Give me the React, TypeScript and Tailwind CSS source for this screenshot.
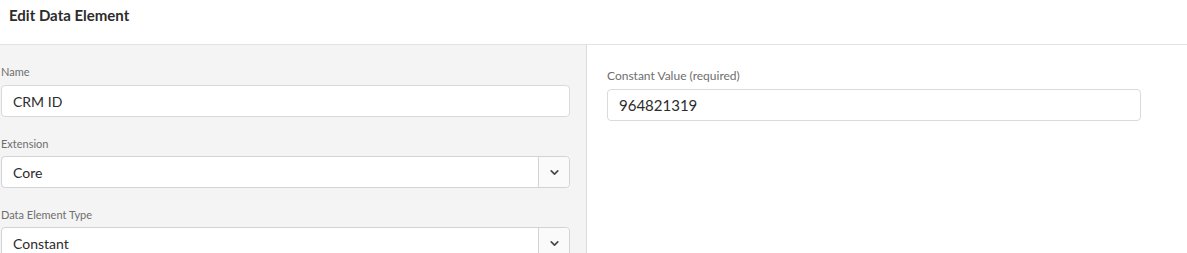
import { ChevronDown } from 'lucide-react';

const font = { fontFamily: 'Lato, "Noto Sans", Arial, sans-serif' };

function Field({
  label,
  value,
  className = '',
  labelSize = 'text-[11px]',
  valueSize = 'text-[14px]',
}: {
  label: string;
  value: string;
  className?: string;
  labelSize?: string;
  valueSize?: string;
}) {
  return (
    <div className={className}>
      <div className={`${labelSize} leading-4 text-[#6e6e6e] mb-[5px]`}>{label}</div>
      <div className={`h-8 bg-white border border-[#dadada] rounded-[4px] flex items-center px-[11px] ${valueSize} text-[#2c2c2c]`}>
        {value}
      </div>
    </div>
  );
}

function SelectField({ label, value, className = '' }: { label: string; value: string; className?: string }) {
  return (
    <div className={className}>
      <div className="text-[11px] leading-4 text-[#6e6e6e] mb-[4px]">{label}</div>
      <div className="h-8 bg-white border border-[#d3d3d3] rounded-[4px] flex text-[14px] text-[#2c2c2c]">
        <div className="flex-1 flex items-center px-[11px]">{value}</div>
        <div className="w-[31px] border-l border-[#d3d3d3] bg-[#fafafa] rounded-r-[4px] flex items-center justify-center">
          <ChevronDown size={13} strokeWidth={3.2} className="text-[#4b4b4b]" />
        </div>
      </div>
    </div>
  );
}

export default function App() {
  return (
    <div className="w-[1187px] h-[253px] bg-white overflow-hidden" style={font}>
      <div className="h-[45px] border-b border-[#e3e3e3] pl-[9px] pt-[5px]">
        <h1 className="text-[15px] font-bold leading-5 text-[#2c2c2c]">Edit Data Element</h1>
      </div>
      <div className="flex h-[208px]">
        <div className="w-[587px] bg-[#f4f4f4] border-r border-[#dcdcdc] pl-px pr-4 pt-[19px]">
          <Field label="Name" value="CRM ID" />
          <SelectField label="Extension" value="Core" className="mt-[19px]" />
          <SelectField label="Data Element Type" value="Constant" className="mt-[19px]" />
        </div>
        <div className="pl-5 pt-[23px]">
          <div className="w-[534px]">
            <Field label="Constant Value (required)" value="964821319" labelSize="text-[12px]" valueSize="text-[15px]" />
          </div>
        </div>
      </div>
    </div>
  );
}
